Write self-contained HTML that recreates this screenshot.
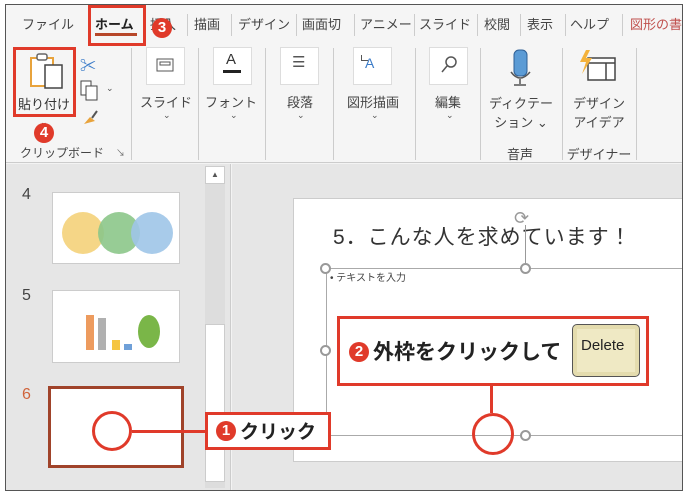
<!DOCTYPE html>
<html><head><meta charset="utf-8"><style>
*{margin:0;padding:0;box-sizing:border-box}
body{width:686px;height:495px;background:#fff;position:relative;overflow:hidden;font-family:"Liberation Sans","Noto Sans CJK JP",sans-serif;color:#333}
.a{position:absolute}
.tab{position:absolute;top:14px;font-size:13px;color:#444}
.sep{position:absolute;width:1px;background:#ccc}
.lbl{position:absolute;font-size:13px;color:#444;text-align:center}
.ib{position:absolute;width:39px;height:38px;background:#fff;border:1px solid #ddd}
.chev{position:absolute;font-size:9px;color:#555}
.h{position:absolute;width:11px;height:11px;border:2px solid #999;border-radius:50%;background:#fff}
.num{position:absolute;width:20px;height:20px;border-radius:50%;background:#e03a2a;color:#fff;font-weight:bold;font-size:15px;text-align:center;line-height:20px}
</style></head><body>
<div class="a" style="left:5px;top:4px;width:678px;height:487px;border:1px solid #555;background:#f3f3f3"></div>
<div class="a" style="left:6px;top:5px;width:676px;height:158px;background:#f5f5f5;border-bottom:1px solid #ccc"></div>
<span class="tab" style="left:22px">ファイル</span>
<span class="tab" style="left:95px;font-weight:bold;color:#222">ホーム</span>
<div class="a" style="left:95px;top:33px;width:42px;height:3px;background:#b7472a"></div>
<div class="a" style="left:88px;top:5px;width:58px;height:41px;border:3px solid #e03a2a"></div>
<span class="tab" style="left:150px">挿入</span>
<div class="num" style="left:152px;top:18px">3</div>
<span class="tab" style="left:194px">描画</span>
<span class="tab" style="left:238px">デザイン</span>
<span class="tab" style="left:302px">画面切</span>
<span class="tab" style="left:360px">アニメー</span>
<span class="tab" style="left:419px">スライド</span>
<span class="tab" style="left:484px">校閲</span>
<span class="tab" style="left:527px">表示</span>
<span class="tab" style="left:570px">ヘルプ</span>
<span class="tab" style="left:630px;color:#c0504d">図形の書</span>
<div class="sep" style="left:187px;top:14px;height:22px"></div>
<div class="sep" style="left:231px;top:14px;height:22px"></div>
<div class="sep" style="left:296px;top:14px;height:22px"></div>
<div class="sep" style="left:354px;top:14px;height:22px"></div>
<div class="sep" style="left:414px;top:14px;height:22px"></div>
<div class="sep" style="left:477px;top:14px;height:22px"></div>
<div class="sep" style="left:520px;top:14px;height:22px"></div>
<div class="sep" style="left:565px;top:14px;height:22px"></div>
<div class="sep" style="left:622px;top:14px;height:22px"></div>
<svg class="a" style="left:28px;top:50px" width="40" height="42"><rect x="3" y="8" width="22" height="28" fill="#fff" stroke="#e8a33c" stroke-width="2"/><rect x="9" y="4" width="10" height="6" rx="2" fill="#fff" stroke="#666" stroke-width="1.5"/><rect x="17" y="15" width="17" height="23" fill="#fff" stroke="#444" stroke-width="1.5"/></svg>
<span class="a" style="left:18px;top:94px;font-size:13px;color:#333">貼り付け</span>
<div class="a" style="left:13px;top:47px;width:63px;height:70px;border:3px solid #e03a2a"></div>
<span class="chev" style="left:40px;top:117px">⌄</span>
<div class="num" style="left:34px;top:123px">4</div>
<span class="a" style="left:80px;top:52px;font-size:16px;color:#3a7bc8">✂</span>
<svg class="a" style="left:80px;top:80px" width="20" height="22"><rect x="1" y="1" width="10" height="14" fill="#fff" stroke="#444"/><rect x="6" y="6" width="11" height="14" fill="#fff" stroke="#444"/></svg>
<span class="chev" style="left:106px;top:83px">⌄</span>
<svg class="a" style="left:80px;top:108px" width="20" height="20"><path d="M4 16 L10 9 L15 13 Z" fill="#e8a33c"/><path d="M12 10 L17 3" stroke="#555" stroke-width="2"/></svg>
<span class="a" style="left:20px;top:144px;font-size:12px;color:#444">クリップボード</span>
<span class="a" style="left:116px;top:146px;font-size:9px;color:#666">↘</span>
<div class="sep" style="left:131px;top:48px;height:112px"></div>
<div class="ib" style="left:146px;top:47px"></div>
<svg class="a" style="left:156px;top:58px" width="18" height="14"><rect x="1" y="1" width="16" height="12" fill="none" stroke="#555"/><rect x="4" y="4" width="10" height="3" fill="none" stroke="#555"/></svg>
<span class="lbl" style="left:140px;top:92px;width:52px">スライド</span><span class="chev" style="left:163px;top:110px">⌄</span>
<div class="sep" style="left:198px;top:48px;height:112px"></div>
<div class="ib" style="left:213px;top:47px"></div>
<span class="a" style="left:226px;top:51px;font-size:15px;color:#333">A</span><div class="a" style="left:223px;top:70px;width:18px;height:3px;background:#222"></div>
<span class="lbl" style="left:205px;top:92px;width:52px">フォント</span><span class="chev" style="left:230px;top:110px">⌄</span>
<div class="sep" style="left:265px;top:48px;height:112px"></div>
<div class="ib" style="left:280px;top:47px"></div>
<span class="a" style="left:292px;top:53px;font-size:15px;color:#555">☰</span>
<span class="lbl" style="left:274px;top:92px;width:52px">段落</span><span class="chev" style="left:297px;top:110px">⌄</span>
<div class="sep" style="left:333px;top:48px;height:112px"></div>
<div class="ib" style="left:353px;top:47px"></div>
<span class="a" style="left:365px;top:55px;font-size:14px;color:#3a7bc8">A</span><div class="a" style="left:361px;top:55px;width:7px;height:6px;border-left:1px solid #555;border-bottom:1px solid #555"></div>
<span class="lbl" style="left:340px;top:92px;width:66px">図形描画</span><span class="chev" style="left:371px;top:110px">⌄</span>
<div class="sep" style="left:415px;top:48px;height:112px"></div>
<div class="ib" style="left:429px;top:47px"></div>
<svg class="a" style="left:439px;top:55px" width="20" height="20"><circle cx="12" cy="7" r="5" fill="none" stroke="#555" stroke-width="1.5"/><path d="M8 11 L3 17" stroke="#555" stroke-width="1.5"/></svg>
<span class="lbl" style="left:422px;top:92px;width:52px">編集</span><span class="chev" style="left:446px;top:110px">⌄</span>
<div class="sep" style="left:480px;top:48px;height:112px"></div>
<svg class="a" style="left:508px;top:48px" width="26" height="40"><rect x="6" y="2" width="13" height="26" rx="5" fill="#5b9bd5" stroke="#2e5f95"/><path d="M3 24 Q12 36 22 24" fill="none" stroke="#555" stroke-width="1.5"/><path d="M12 31 V36 M6 37 H18" stroke="#555" stroke-width="1.5"/></svg>
<span class="lbl" style="left:488px;top:94px;width:66px;line-height:19px">ディクテー<br>ション ⌄</span>
<span class="lbl" style="left:500px;top:144px;width:40px">音声</span>
<div class="sep" style="left:562px;top:48px;height:112px"></div>
<svg class="a" style="left:578px;top:48px" width="40" height="36"><rect x="10" y="10" width="27" height="22" fill="#fff" stroke="#444" stroke-width="1.5"/><path d="M10 15 H37 M28 15 V32" stroke="#444" stroke-width="1.5"/><path d="M8 2 L2 14 L8 14 L4 26 L14 10 L8 10 L12 2Z" fill="#f4b23b"/></svg>
<span class="lbl" style="left:566px;top:94px;width:66px;line-height:19px">デザイン<br>アイデア</span>
<span class="lbl" style="left:566px;top:144px;width:66px">デザイナー</span>
<div class="sep" style="left:636px;top:48px;height:112px"></div>
<!-- main -->
<div class="a" style="left:232px;top:164px;width:450px;height:326px;background:#e6e6e6"></div>
<div class="a" style="left:293px;top:198px;width:389px;height:264px;background:#fff;border:1px solid #ccc;border-right:none"></div>
<span class="a" style="left:333px;top:221px;font-size:21px;color:#333;letter-spacing:1px">5．こんな人を求めています！</span>
<div class="a" style="left:326px;top:268px;width:356px;height:167px;border:1px solid #aaa;border-right:none;border-bottom:none"></div>
<div class="a" style="left:326px;top:435px;width:356px;height:1px;background:#aaa"></div>
<div class="a" style="left:525px;top:225px;width:1px;height:43px;background:#999"></div>
<span class="a" style="left:514px;top:208px;font-size:18px;color:#999">⟳</span>
<div class="h" style="left:320px;top:263px"></div>
<div class="h" style="left:520px;top:263px"></div>
<div class="h" style="left:320px;top:345px"></div>
<div class="h" style="left:520px;top:430px"></div>
<span class="a" style="left:330px;top:269px;font-size:10px;color:#444">• テキストを入力</span>
<div class="a" style="left:337px;top:316px;width:312px;height:70px;background:#fff;border:3px solid #e03a2a"></div>
<div class="num" style="left:349px;top:342px">2</div>
<span class="a" style="left:373px;top:336px;font-size:21px;font-weight:bold;color:#222">外枠をクリックして</span>
<div class="a" style="left:572px;top:324px;width:68px;height:53px;background:#efe9c4;border:1px solid #555;border-radius:5px;box-shadow:inset 0 0 0 4px #e4dcae"></div>
<span class="a" style="left:581px;top:337px;font-size:15px;color:#222">Delete</span>
<div class="a" style="left:490px;top:385px;width:3px;height:28px;background:#e03a2a"></div>
<div class="a" style="left:472px;top:413px;width:42px;height:42px;border-radius:50%;border:3px solid #e03a2a;background:transparent"></div>
<!-- left pane -->
<div class="a" style="left:6px;top:164px;width:225px;height:326px;background:#e6e6e6;border-right:1px solid #ccc"></div>
<div class="a" style="left:205px;top:166px;width:20px;height:322px;background:#ddd"></div>
<div class="a" style="left:205px;top:166px;width:20px;height:18px;background:#fff;border:1px solid #ccc;font-size:8px;text-align:center;line-height:16px;color:#555">▲</div>
<div class="a" style="left:205px;top:324px;width:20px;height:158px;background:#fff;border:1px solid #ccc"></div>
<span class="a" style="left:22px;top:186px;font-size:16px;color:#444">4</span>
<div class="a" style="left:52px;top:192px;width:128px;height:72px;background:#fff;border:1px solid #ccc"></div>
<div class="a" style="left:62px;top:212px;width:42px;height:42px;border-radius:50%;background:#f4d27a;opacity:.9"></div>
<div class="a" style="left:98px;top:212px;width:42px;height:42px;border-radius:50%;background:#8cc68a;opacity:.9"></div>
<div class="a" style="left:131px;top:212px;width:42px;height:42px;border-radius:50%;background:#9fc5e8;opacity:.9"></div>
<span class="a" style="left:22px;top:287px;font-size:16px;color:#444">5</span>
<div class="a" style="left:52px;top:290px;width:128px;height:73px;background:#fff;border:1px solid #ccc"></div>
<div class="a" style="left:86px;top:315px;width:8px;height:35px;background:#ed9b5e"></div>
<div class="a" style="left:98px;top:318px;width:8px;height:32px;background:#b0b0b0"></div>
<div class="a" style="left:112px;top:340px;width:8px;height:10px;background:#f5c542"></div>
<div class="a" style="left:124px;top:344px;width:8px;height:6px;background:#6fa0d8"></div>
<div class="a" style="left:138px;top:315px;width:22px;height:33px;border-radius:50%;background:#7ab648"></div>
<span class="a" style="left:22px;top:386px;font-size:16px;color:#d0643c">6</span>
<div class="a" style="left:48px;top:386px;width:136px;height:82px;background:#fff;border:3px solid #a0432a"></div>
<div class="a" style="left:92px;top:411px;width:40px;height:40px;border-radius:50%;border:3px solid #e03a2a"></div>
<div class="a" style="left:132px;top:430px;width:74px;height:3px;background:#e03a2a"></div>
<div class="a" style="left:205px;top:412px;width:126px;height:38px;background:#fff;border:3px solid #e03a2a"></div>
<div class="num" style="left:216px;top:421px">1</div>
<span class="a" style="left:240px;top:417px;font-size:19px;font-weight:bold;color:#222">クリック</span>
</body></html>
